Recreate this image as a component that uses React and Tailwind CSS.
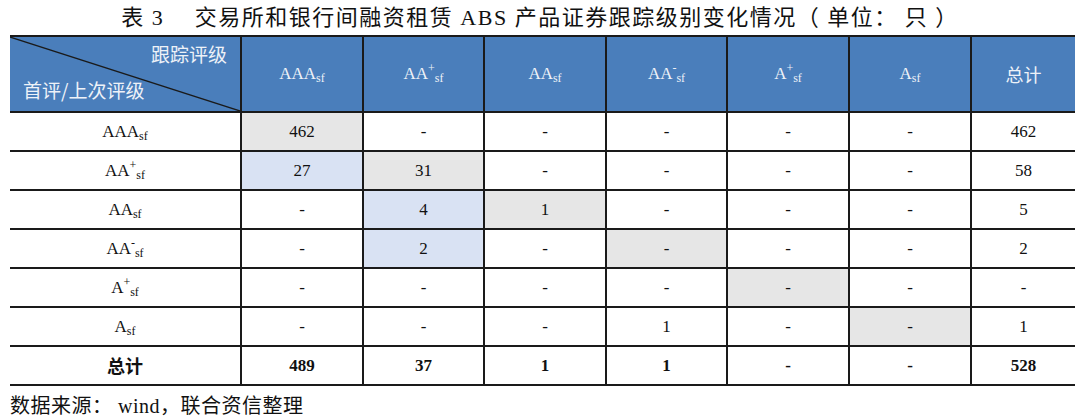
import React from "react";

const SERIF = { fontFamily: '"Liberation Serif", "Noto Sans CJK SC", serif' };
const SANS = { fontFamily: '"Noto Sans CJK SC", "Liberation Sans", sans-serif' };

function Grade({ base, mark }) {
  return (
    <span>
      {base}
      {mark && <sup className="text-[12px] -top-[7px]">{mark}</sup>}
      <sub className="text-[12px]">sf</sub>
    </span>
  );
}

const COLS = [
  { base: "AAA" },
  { base: "AA", mark: "+" },
  { base: "AA" },
  { base: "AA", mark: "-" },
  { base: "A", mark: "+" },
  { base: "A" },
];

// cell: [value, fill]  g = grey, b = light blue
const ROWS = [
  { label: COLS[0], cells: [["462", "g"], ["-"], ["-"], ["-"], ["-"], ["-"], ["462"]] },
  { label: COLS[1], cells: [["27", "b"], ["31", "g"], ["-"], ["-"], ["-"], ["-"], ["58"]] },
  { label: COLS[2], cells: [["-"], ["4", "b"], ["1", "g"], ["-"], ["-"], ["-"], ["5"]] },
  { label: COLS[3], cells: [["-"], ["2", "b"], ["-"], ["-", "g"], ["-"], ["-"], ["2"]] },
  { label: COLS[4], cells: [["-"], ["-"], ["-"], ["-"], ["-", "g"], ["-"], ["-"]] },
  { label: COLS[5], cells: [["-"], ["-"], ["-"], ["1"], ["-"], ["-", "g"], ["1"]] },
];

const TOTALS = ["489", "37", "1", "1", "-", "-", "528"];

const fill = { g: "bg-[#e6e6e6]", b: "bg-[#d9e2f3]" };

export default function App() {
  return (
    <div className="w-[1080px] h-[420px] bg-white text-[#111] overflow-hidden" style={SERIF}>
      <div className="h-[35px] flex items-center justify-center text-[22px] tracking-[1.5px] whitespace-pre">
        表 3　 交易所和银行间融资租赁 ABS 产品证券跟踪级别变化情况（ 单位： 只 ）
      </div>

      <table className="ml-[10px] w-[1065px] border-collapse table-fixed text-[17px]">
        <colgroup>
          <col className="w-[231px]" />
          <col className="w-[122px]" />
          <col className="w-[121px]" />
          <col className="w-[122px]" />
          <col className="w-[121px]" />
          <col className="w-[122px]" />
          <col className="w-[122px]" />
          <col />
        </colgroup>
        <thead>
          <tr className="h-[76px] bg-[#4a7ebb] text-[#eef2f8] border-t-2 border-[#1a1a1a]">
            <th className="relative p-0 font-normal align-top" style={SANS}>
              <svg className="absolute inset-0 w-full h-full" viewBox="0 0 231 76" preserveAspectRatio="none">
                <line x1="0" y1="0" x2="231" y2="76" stroke="#1a1a1a" strokeWidth="1.3" />
              </svg>
              <div className="relative flex flex-col px-[13px] pt-[4px] text-[19px] leading-[26px]">
                <div className="text-right">跟踪评级</div>
                <div className="text-left mt-[10px]">首评/上次评级</div>
              </div>
            </th>
            {COLS.map((c, i) => (
              <th key={i} className="font-normal border-l-2 border-[#1a1a1a]">
                <Grade {...c} />
              </th>
            ))}
            <th className="font-normal text-[18px] border-l-2 border-[#1a1a1a]" style={SANS}>总计</th>
          </tr>
        </thead>
        <tbody>
          {ROWS.map((r, ri) => (
            <tr key={ri} className="h-[39px] border-t-2 border-[#1a1a1a]">
              <td className="text-center">
                <Grade {...r.label} />
              </td>
              {r.cells.map(([v, f], ci) => (
                <td key={ci} className={`text-center border-l-2 border-[#1a1a1a] ${f ? fill[f] : ""}`}>
                  {v}
                </td>
              ))}
            </tr>
          ))}
          <tr className="h-[39px] border-t-2 border-b-2 border-[#1a1a1a] font-bold">
            <td className="text-center text-[18px]" style={SANS}>总计</td>
            {TOTALS.map((v, i) => (
              <td key={i} className="text-center border-l-2 border-[#1a1a1a]">{v}</td>
            ))}
          </tr>
        </tbody>
      </table>

      <div className="ml-[10px] mt-[5px] text-[20px] tracking-[0.5px] whitespace-pre">数据来源： wind，联合资信整理</div>
    </div>
  );
}
